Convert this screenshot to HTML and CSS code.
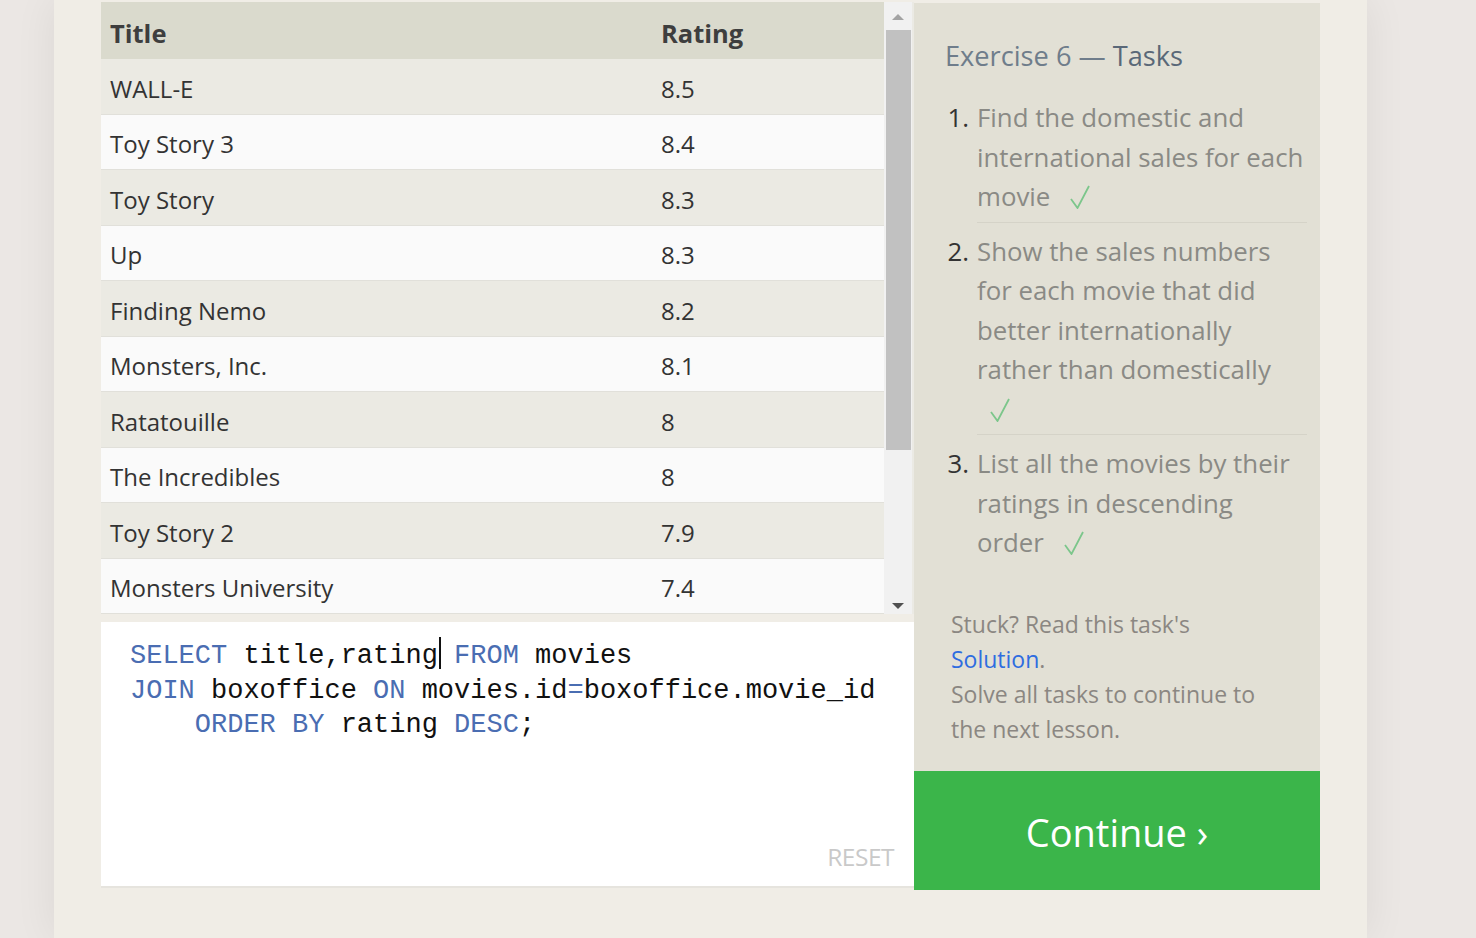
FILE: index.html
```html
<!DOCTYPE html>
<html lang="en">
<head>
<meta charset="utf-8">
<title>Exercise 6 — Tasks</title>
<link rel="stylesheet" href="styles.css">
</head>
<body>
<div class="page">
  <div class="workspace">
    <div class="left">
      <div class="results">
        <div class="table">
          <div class="row head"><div class="c1">Title</div><div class="c2">Rating</div></div>
          <div class="row odd"><div class="c1">WALL-E</div><div class="c2">8.5</div></div>
          <div class="row even"><div class="c1">Toy Story 3</div><div class="c2">8.4</div></div>
          <div class="row odd"><div class="c1">Toy Story</div><div class="c2">8.3</div></div>
          <div class="row even"><div class="c1">Up</div><div class="c2">8.3</div></div>
          <div class="row odd"><div class="c1">Finding Nemo</div><div class="c2">8.2</div></div>
          <div class="row even"><div class="c1">Monsters, Inc.</div><div class="c2">8.1</div></div>
          <div class="row odd"><div class="c1">Ratatouille</div><div class="c2">8</div></div>
          <div class="row even"><div class="c1">The Incredibles</div><div class="c2">8</div></div>
          <div class="row odd"><div class="c1">Toy Story 2</div><div class="c2">7.9</div></div>
          <div class="row even"><div class="c1">Monsters University</div><div class="c2">7.4</div></div>
        </div>
        <div class="scrollbar">
          <div class="arrow up"></div>
          <div class="track"><div class="thumb"></div></div>
          <div class="arrow down"></div>
        </div>
      </div>
      <div class="editor">
        <pre class="code"><span class="line"><span class="kw">SELECT</span> title,rating<span class="cursor"></span> <span class="kw">FROM</span> movies</span>
<span class="line"><span class="kw">JOIN</span> boxoffice <span class="kw">ON</span> movies.id<span class="kw">=</span>boxoffice.movie_id</span>
<span class="line">    <span class="kw">ORDER BY</span> rating <span class="kw">DESC</span>;</span></pre>
        <div class="reset">RESET</div>
      </div>
    </div>
    <div class="right">
      <div class="tasks">
        <h2 class="heading">Exercise 6 — <span class="dark">Tasks</span></h2>
        <div class="task">
          <div class="num">1.</div>
          <div class="body">Find the domestic and<br>international sales for each<br>movie <svg class="check" viewBox="0 0 20 24" width="20" height="24"><polyline points="1,14 7.5,23 19,1" fill="none" stroke="#7cc68b" stroke-width="1.8"/></svg></div>
        </div>
        <div class="task">
          <div class="num">2.</div>
          <div class="body">Show the sales numbers<br>for each movie that did<br>better internationally<br>rather than domestically<br><svg class="check" viewBox="0 0 20 24" width="20" height="24"><polyline points="1,14 7.5,23 19,1" fill="none" stroke="#7cc68b" stroke-width="1.8"/></svg></div>
        </div>
        <div class="task last">
          <div class="num">3.</div>
          <div class="body">List all the movies by their<br>ratings in descending<br>order <svg class="check" viewBox="0 0 20 24" width="20" height="24"><polyline points="1,14 7.5,23 19,1" fill="none" stroke="#7cc68b" stroke-width="1.8"/></svg></div>
        </div>
        <p class="help">Stuck? Read this task's<br><a class="link" href="#">Solution</a>.<br>Solve all tasks to continue to<br>the next lesson.</p>
      </div>
      <div class="continue">Continue ›</div>
    </div>
  </div>
</div>
</body>
</html>
```
FILE: styles.css
```css
html, body {
  margin: 0;
  padding: 0;
}
body {
  background: #ebe7e4;
  font-family: "Open Sans", "Noto Sans", sans-serif;
  overflow: hidden;
}
.page {
  margin-left: 54px;
  width: 1313px;
  height: 938px;
  background: #f0ede6;
  box-shadow: 0 0 40px rgba(0, 0, 0, 0.07);
  padding: 0 0 0 47px;
  box-sizing: border-box;
}
.workspace {
  display: flex;
  padding-top: 2px;
}
.left {
  width: 813px;
  display: flex;
  flex-direction: column;
}
.results {
  display: flex;
  height: 612px;
  background: #ebeae4;
}
.table {
  width: 783px;
  display: flex;
  flex-direction: column;
}
.row {
  display: flex;
  align-items: center;
  height: 55.5px;
  box-sizing: border-box;
  border-bottom: 1px solid #e1e0da;
  color: #333;
  font-size: 24px;
  padding-top: 4px;
}
.row.head {
  height: 57px;
  background: #dadacd;
  font-weight: 700;
  color: #3e3e3e;
  font-size: 25.5px;
  border-bottom: 0;
}
.row.odd { background: #ebeae3; }
.row.even { background: #fafafa; }
.c1 {
  width: 551px;
  padding-left: 9px;
  box-sizing: border-box;
}
.c2 {
  padding-left: 9px;
}
.scrollbar {
  width: 28px;
  background: #f1f1f1;
  display: flex;
  flex-direction: column;
  align-items: center;
}
.arrow {
  width: 0;
  height: 0;
  border-left: 6px solid transparent;
  border-right: 6px solid transparent;
}
.arrow.up {
  margin: 12px 0 10px;
  border-bottom: 6px solid #a3a3a3;
}
.arrow.down {
  margin: 4px 0 5px;
  border-top: 6px solid #505050;
}
.track {
  flex: 1;
  width: 100%;
  display: flex;
  justify-content: flex-end;
  padding-right: 1px;
  box-sizing: border-box;
}
.thumb {
  width: 25px;
  height: 420px;
  background: #c1c1c1;
}
.editor {
  margin-top: 8px;
  height: 266px;
  background: #fff;
  border-bottom: 2px solid #e6e4de;
  box-sizing: border-box;
  display: flex;
  flex-direction: column;
  padding: 15px 20px 16px 29px;
}
.code {
  margin: 0;
  font-family: "Liberation Mono", "DejaVu Sans Mono", monospace;
  font-size: 27px;
  line-height: 34.5px;
  color: #111;
}
.kw { color: #4a6db2; }
.cursor {
  display: inline-block;
  width: 2px;
  height: 32px;
  background: #111;
  vertical-align: -6px;
  margin-left: 1px;
  margin-right: -3px;
}
.reset {
  margin-top: auto;
  align-self: flex-end;
  color: #c9c9c9;
  font-size: 24.5px;
  line-height: 26px;
  letter-spacing: -0.5px;
}
.right {
  width: 406px;
  padding-top: 1px;
  display: flex;
  flex-direction: column;
}
.tasks {
  height: 768px;
  background: #e2e0d5;
  box-sizing: border-box;
  padding: 35px 13px 24px 31px;
  display: flex;
  flex-direction: column;
}
.heading {
  margin: 0 0 24px;
  font-weight: 400;
  font-size: 27.2px;
  line-height: 36px;
  color: #6f7d8b;
  white-space: nowrap;
}
.heading .dark { color: #5a6878; }
.task {
  display: flex;
  font-size: 25.8px;
  line-height: 39.5px;
  color: #8a8a85;
  white-space: nowrap;
}
.num {
  width: 24px;
  text-align: right;
  margin-right: 8px;
  color: #333;
}
.body {
  flex: 1;
  border-bottom: 1px solid #d5d3c8;
  padding-bottom: 5px;
  margin-bottom: 9px;
}
.task.last .body { border-bottom: 0; }
.check {
  margin-left: 13px;
  vertical-align: -3px;
}
.help {
  margin: auto 0 0 6px;
  font-size: 23px;
  line-height: 35px;
  color: #8b8782;
  white-space: nowrap;
}
.link {
  color: #2f6de0;
  text-decoration: none;
}
.continue {
  height: 119px;
  background: #3bb54a;
  color: #fff;
  font-size: 38px;
  display: flex;
  align-items: center;
  justify-content: center;
  padding-top: 3px;
  box-sizing: border-box;
}
```
